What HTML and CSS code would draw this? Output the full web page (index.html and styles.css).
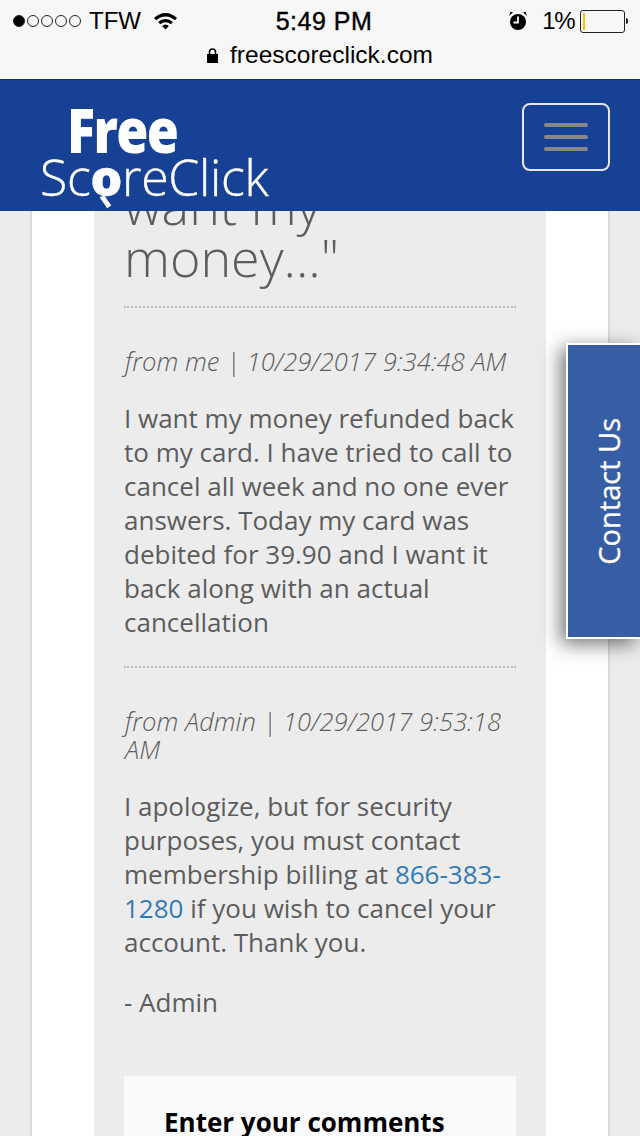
FILE: index.html
```html
<!doctype html>
<html lang="en">
<head>
  <meta charset="UTF-8">
  <title>FreeScoreClick</title>
  <link rel="stylesheet" href="styles.css">
</head>
<body>
  <div class="phone">
    <div class="statusbar">
      <div class="status-row">
        <div class="status-left">
          <span class="signal">
            <i class="dot dot-on"></i><i class="dot"></i><i class="dot"></i><i class="dot"></i><i class="dot"></i>
          </span>
          <span class="carrier">TFW</span>
          <svg class="wifi" width="25" height="18" viewBox="0 0 24 18">
            <path d="M0.5 6 A16 16 0 0 1 23.5 6 L21.3 8.3 A13 13 0 0 0 2.7 8.3 Z"/>
            <path d="M4.6 10 A10.5 10.5 0 0 1 19.4 10 L17.2 12.3 A7.5 7.5 0 0 0 6.8 12.3 Z"/>
            <path d="M8.6 14 A5 5 0 0 1 15.4 14 L12 17.6 Z"/>
          </svg>
        </div>
        <div class="clock">5:49 PM</div>
        <div class="status-right">
          <svg class="alarm" width="20" height="20" viewBox="0 0 20 20">
            <circle cx="10" cy="11" r="8"/>
            <path d="M1 5 L5 1.2 L2.5 0.8 Z M19 5 L15 1.2 L17.5 0.8 Z"/>
            <path d="M10 5.5 V11.5 H5.5" fill="none" stroke="#f7f7f7" stroke-width="1.8"/>
          </svg>
          <span class="percent">1%</span>
          <span class="battery"><i class="battery-level"></i></span>
          <i class="battery-tip"></i>
        </div>
      </div>
      <div class="url-row">
        <svg class="lock" width="11" height="15" viewBox="0 0 11 15">
          <path d="M0 6 H11 V15 H0 Z"/>
          <path d="M2.5 6.5 V4 A3 3 0 0 1 8.5 4 V6.5" fill="none" stroke="#000" stroke-width="1.5"/>
        </svg>
        <span>freescoreclick.com</span>
      </div>
    </div>

    <header class="site-header">
      <a class="logo" href="#">
        <span class="logo-free">Free</span>
        <span class="logo-name">Sc<b class="logo-o">o</b>reClick</span>
      </a>
      <button class="menu-btn" type="button">
        <i></i><i></i><i></i>
      </button>
    </header>

    <div class="scroller">
      <main class="card">
        <section class="panel">
          <h1 class="title">want my money..."</h1>

          <div class="message">
            <p class="meta">from me | 10/29/2017 9:34:48 AM</p>
            <p>I want my money refunded back to my card. I have tried to call to cancel all week and no one ever answers. Today my card was debited for 39.90 and I want it back along with an actual cancellation</p>
          </div>

          <div class="message">
            <p class="meta">from Admin | 10/29/2017 9:53:18 AM</p>
            <p>I apologize, but for security purposes, you must contact membership billing at <a href="#">866-383-1280</a> if you wish to cancel your account. Thank you.</p>
            <p>- Admin</p>
          </div>

          <div class="comment-box">
            <h2>Enter your comments</h2>
          </div>
        </section>
      </main>
    </div>

    <a class="contact-tab" href="#"><span>Contact Us</span></a>
  </div>
</body>
</html>
```

FILE: styles.css
```css
body, p, h1, h2 {
  margin: 0;
  padding: 0;
}

body {
  font-family: "Open Sans", "Liberation Sans", sans-serif;
  background: #ececec;
}

.phone {
  width: 640px;
  height: 1136px;
  position: relative;
  display: flex;
  flex-direction: column;
  overflow: hidden;
}

/* ios chrome */
.statusbar {
  height: 79px;
  flex: none;
  background: #f7f7f7;
  color: #000;
  font-family: "Liberation Sans", Arial, sans-serif;
  border-bottom: 1px solid #14305f;
}

.status-row {
  height: 40px;
  padding: 1px 12px 0 13px;
  display: flex;
  align-items: center;
  justify-content: space-between;
  font-size: 24px;
}

.status-left, .status-right {
  width: 200px;
  display: flex;
  align-items: center;
}

.status-right {
  justify-content: flex-end;
}

.signal {
  display: flex;
  gap: 2px;
}

.dot {
  width: 12px;
  height: 12px;
  box-sizing: border-box;
  border: 1px solid #222;
  border-radius: 50%;
}

.dot-on {
  background: #000;
}

.carrier {
  margin-left: 8px;
}

.wifi {
  margin-left: 12px;
}

.clock {
  font-size: 25px;
  font-weight: 500;
  letter-spacing: 0.5px;
  margin-left: 7px;
  -webkit-text-stroke: 0.4px #000;
}

.alarm {
  margin-right: 14px;
}

.percent {
  margin-right: 6px;
  letter-spacing: -1.5px;
}

.battery {
  width: 39px;
  height: 17px;
  border: 1px solid #222;
  border-radius: 3px;
  padding: 2px;
  box-sizing: content-box;
}

.battery-level {
  display: block;
  width: 2px;
  height: 100%;
  background: #f5c400;
}

.battery-tip {
  width: 2px;
  height: 6px;
  margin-left: 1px;
  background: #222;
  border-radius: 0 2px 2px 0;
}

.url-row {
  display: flex;
  align-items: center;
  justify-content: center;
  gap: 12px;
  font-size: 24.5px;
  height: 28px;
}

/* site header */
.site-header {
  height: 131px;
  flex: none;
  position: relative;
  z-index: 10;
  background: #164194;
  display: flex;
  align-items: flex-start;
  justify-content: space-between;
  padding: 23px 30px 0 40px;
  box-sizing: border-box;
}

.logo {
  display: flex;
  flex-direction: column;
  align-items: flex-start;
  color: #fff;
  text-decoration: none;
}

.logo-free {
  font-weight: 800;
  font-size: 62px;
  line-height: 52px;
  letter-spacing: -2px;
  margin-left: 27px;
  transform: scaleX(0.84);
  transform-origin: left center;
}

.logo-name {
  font-weight: 300;
  font-size: 50px;
  line-height: 44px;
  letter-spacing: -0.3px;
  -webkit-text-stroke: 0.4px #fff;
}

.logo-o {
  position: relative;
  font-weight: 800;
}

/* the tail under the o of the logo */
.logo-o:after {
  content: '';
  position: absolute;
  left: 13px;
  bottom: 3px;
  width: 5px;
  height: 13px;
  background: #fff;
  transform: rotate(-35deg);
}

.menu-btn {
  width: 88px;
  height: 68px;
  padding: 0;
  background: transparent;
  border: 2px solid #e6e6e6;
  border-radius: 8px;
  display: flex;
  flex-direction: column;
  align-items: center;
  justify-content: center;
  gap: 8px;
}

.menu-btn i {
  display: block;
  width: 44px;
  height: 4px;
  border-radius: 2px;
  background: #888;
}

/* content, scrolled so the title sits under the header */
.scroller {
  flex: 1;
  overflow: hidden;
  padding: 0 32px;
}

.card {
  margin-top: -32px;
  background: #fff;
  padding: 0 62px;
  box-shadow: 0 0 3px rgba(0, 0, 0, 0.25);
}

.panel {
  background: #ececec;
  padding: 0 30px;
  color: #5c5c5c;
  font-size: 26px;
  line-height: 34px;
}

.title {
  font-weight: 300;
  font-size: 52px;
  line-height: 52px;
  padding-bottom: 23px;
}

.message {
  border-top: 2px dotted #b9b9c6;
  padding: 39px 0 27px;
}

.message p {
  margin-bottom: 26px;
}

.message p:last-child {
  margin-bottom: 0;
}

.message .meta {
  font-style: italic;
  font-weight: 300;
  font-size: 25.5px;
  letter-spacing: 0.05px;
  line-height: 28px;
  margin-bottom: 26px;
  padding-left: 1px;
}

.message a {
  color: #337ab7;
  text-decoration: none;
}

.comment-box {
  background: #f9fafc;
  margin-top: 30px;
  padding: 29px 40px;
  height: 200px;
}

.comment-box h2 {
  color: #000;
  font-size: 26px;
  line-height: 34px;
  font-weight: 700;
}

/* floating tab */
.contact-tab {
  position: absolute;
  left: 566px;
  top: 343px;
  width: 74px;
  height: 296px;
  box-sizing: border-box;
  padding-left: 8px;
  background: #375ea5;
  border: 2px solid #fff;
  border-right: 0;
  box-shadow: -5px 5px 18px rgba(0, 0, 0, 0.55);
  color: #fff;
  text-decoration: none;
  font-size: 29px;
  -webkit-text-stroke: 0.3px #fff;
  display: flex;
  align-items: center;
  justify-content: center;
}

.contact-tab span {
  writing-mode: vertical-rl;
  transform: rotate(180deg);
}
```
